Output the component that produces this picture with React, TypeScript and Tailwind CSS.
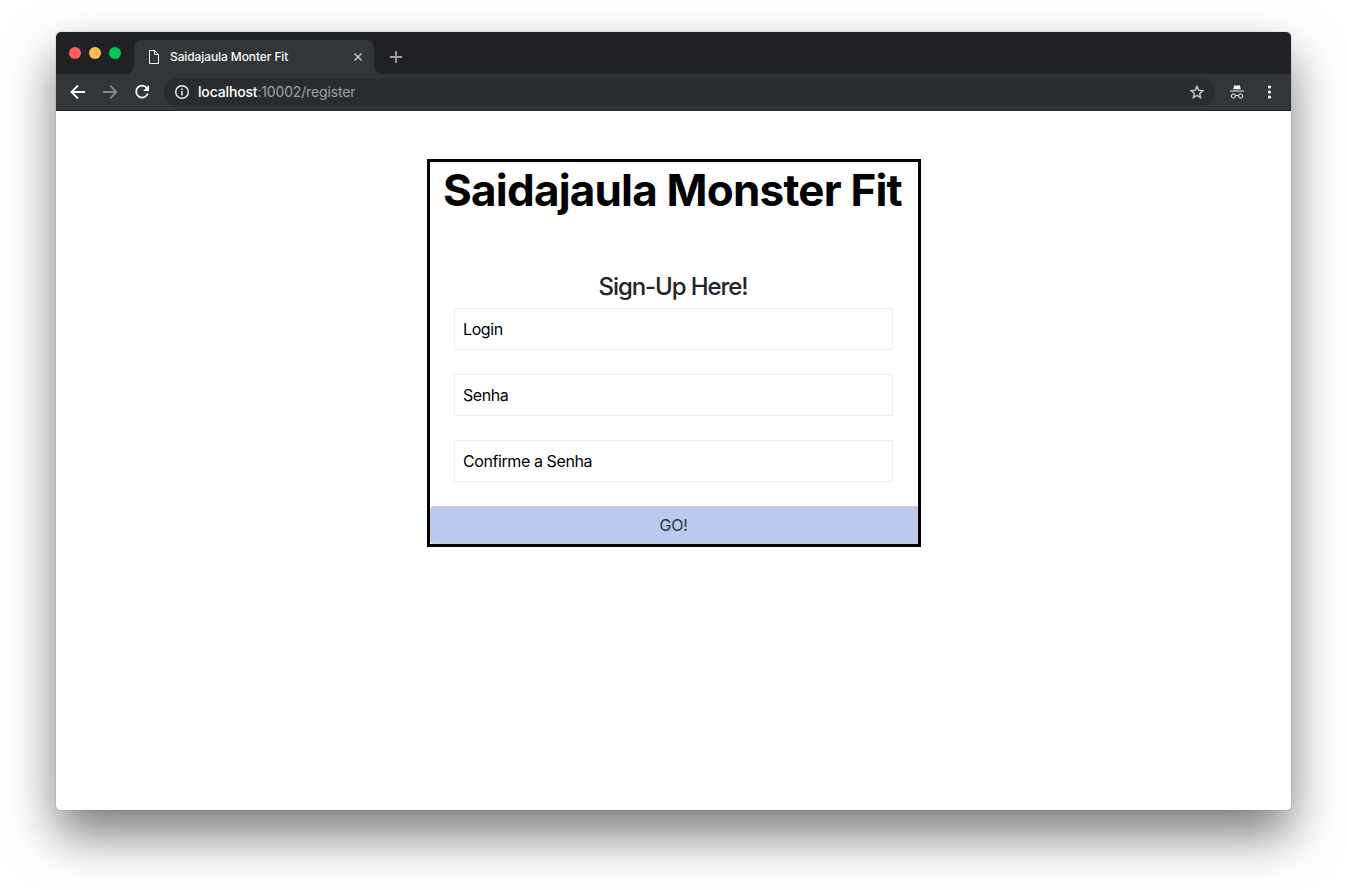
import type { ReactNode } from "react";

function Field({ label }: { label: string }) {
  return (
    <input
      type="text"
      placeholder={label}
      className="block h-[42px] w-[439px] border border-[#ffe6f7] bg-white px-2 text-[16px] tracking-[-0.41px] text-black outline-none placeholder:text-black"
    />
  );
}

function Dot({ color }: { color: string }) {
  return <span className={`block size-3 rounded-full ${color}`} />;
}

function Icon({ size, className, children }: { size: number; className?: string; children: ReactNode }) {
  return (
    <svg width={size} height={size} viewBox={`0 0 ${size} ${size}`} fill="none" stroke="currentColor" className={`block shrink-0 ${className ?? ""}`}>
      {children}
    </svg>
  );
}

function TabStrip() {
  return (
    <div className="flex h-[42px] bg-[#202124]">
      <div className="flex w-[78px] gap-2 pt-[15px] pl-[13px]">
        <Dot color="bg-[#ff5f57]" />
        <Dot color="bg-[#ffbd4e]" />
        <Dot color="bg-[#00ca56]" />
      </div>
      <div className="relative mt-2 flex h-[34px] w-[240px] items-center rounded-t-lg bg-[#323639] pl-[14px]">
        <svg width="8" height="8" className="absolute bottom-0 -left-2" fill="#323639">
          <path d="M8 0v8H0a8 8 0 0 0 8-8Z" />
        </svg>
        <svg width="8" height="8" className="absolute -right-2 bottom-0" fill="#323639">
          <path d="M0 0v8h8a8 8 0 0 1-8-8Z" />
        </svg>
        <svg width="12" height="14" viewBox="0 0 12 14" fill="none" stroke="#f1f3f4" className="block">
          <path d="M1.5.5h5l4 4v9h-9zM6.5.5v4h4" />
        </svg>
        <span className="ml-[10px] w-[184px] text-[12px] font-medium tracking-[-0.1px] whitespace-nowrap text-[#f8f9fa]">Saidajaula Monter Fit</span>
        <Icon size={8} className="text-[#bdc1c6]">
          <path d="m.5.5 7 7m0-7-7 7" strokeWidth="1.5" />
        </Icon>
      </div>
      <div className="pt-[19px] pl-4">
        <Icon size={12} className="text-[#9fa3a7]">
          <path d="M6 0v12M0 6h12" strokeWidth="1.8" />
        </Icon>
      </div>
    </div>
  );
}

function Toolbar() {
  return (
    <div className="flex h-[37px] items-center border-b border-[#24272a] bg-[#323639] pl-[14px]">
      <Icon size={16} className="text-[#f8f9fa]">
        <path d="M15 8H2M8 1.5 1.5 8 8 14.5" strokeWidth="1.8" />
      </Icon>
      <Icon size={16} className="ml-4 text-[#85888b]">
        <path d="M1 8h13M8 1.5 14.5 8 8 14.5" strokeWidth="1.8" />
      </Icon>
      <Icon size={16} className="ml-4 text-[#f8f9fa]">
        <path d="M13.1 4.2A6 6 0 1 0 13.8 9.5" strokeWidth="1.8" />
        <path d="M15 1v6H9Z" fill="currentColor" stroke="none" />
      </Icon>
      <div className="ml-[14px] flex h-7 w-[1051px] items-center rounded-full bg-[#282c2f] pl-[11px] text-[14px]">
        <Icon size={14} className="text-[#f1f3f4]">
          <circle cx="7" cy="7" r="6.3" strokeWidth="1.4" />
          <path d="M7 6v4.5M7 3.5V5" strokeWidth="1.5" />
        </Icon>
        <div className="ml-[9px] w-[992px] pb-0.5 tracking-[-0.16px] text-[#9aa0a6]">
          <span className="font-medium text-white">localhost</span>:10002/register
        </div>
        <Icon size={14} className="text-[#c6c9cc]">
          <path d="m7 1.3 1.65 3.95 4.3.37-3.25 2.8.98 4.2L7 10.4l-3.68 2.22.98-4.2-3.25-2.8 4.3-.37Z" strokeWidth="1.4" />
        </Icon>
      </div>
      <svg width="14" height="14" viewBox="0 0 14 14" fill="none" stroke="#f1f3f4" className="ml-[15px] block">
        <path d="M3.2 4.3 4.1.5Q4.3 0 4.9.2L7 .7 9.1.2Q9.7 0 9.9.5l.9 3.8Z" fill="#f1f3f4" stroke="none" />
        <path d="M0 6h14" strokeWidth="1.2" />
        <circle cx="3.4" cy="11" r="2.1" strokeWidth="1" />
        <circle cx="10.6" cy="11" r="2.1" strokeWidth="1" />
        <path d="M5.5 10.7q1.5-.7 3 0" />
      </svg>
      <svg width="4" height="14" viewBox="0 0 4 14" fill="#fff" className="ml-[24px] block">
        <circle cx="1.5" cy="2" r="1.6" />
        <circle cx="1.5" cy="7" r="1.6" />
        <circle cx="1.5" cy="12" r="1.6" />
      </svg>
    </div>
  );
}

export default function App() {
  return (
    <div className="h-[890px] w-full overflow-hidden bg-white px-14 pt-8 font-['Inter','Liberation_Sans',sans-serif]">
      <div className="h-[778px] w-[1235px] rounded-[5px] shadow-[0_0_1px_rgba(0,0,0,0.5),0_25px_50px_rgba(0,0,0,0.52)]">
        <div className="h-full overflow-hidden rounded-[5px] bg-white">
          <TabStrip />
          <Toolbar />
          <main className="flex justify-center pt-12">
            <form className="flex h-[388px] w-[494px] flex-col items-center border-[3px] border-black">
              <h1 className="h-[110px] pt-px pr-0.5 text-[44px] leading-[54px] font-bold tracking-[-0.8px] whitespace-nowrap text-black">Saidajaula Monster Fit</h1>
              <h2 className="h-9 pr-px text-[24px] leading-[29px] font-medium tracking-[-1.1px] text-[#212529]">Sign-Up Here!</h2>
              <div className="flex flex-col gap-6">
                <Field label="Login" />
                <Field label="Senha" />
                <Field label="Confirme a Senha" />
              </div>
              <button type="button" className="mt-6 h-[38px] w-full rounded-l-[4px] border border-[#ccc] bg-[#bac9ed] text-[16px] tracking-[-0.3px] text-[#333]">
                GO!
              </button>
            </form>
          </main>
        </div>
      </div>
    </div>
  );
}
